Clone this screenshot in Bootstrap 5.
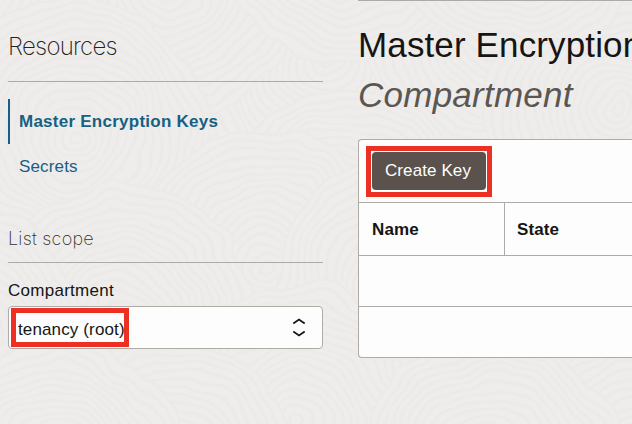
<!DOCTYPE html>
<html lang="en">
<head>
<meta charset="utf-8">
<meta name="viewport" content="width=device-width, initial-scale=1">
<title>Master Encryption Keys</title>
<link href="https://cdn.jsdelivr.net/npm/bootstrap@5.3.0/dist/css/bootstrap.min.css" rel="stylesheet">
<style>
  body { font-family: "Liberation Sans", Arial, sans-serif; background: #edecea; color: #161513; width: 632px; height: 424px; overflow: hidden; }
  .texture { position: absolute; inset: 0; z-index: -1; }
  .side { width: 315px; margin-left: 8px; }
  .thin { font-family: Inter, "Liberation Sans", sans-serif; font-weight: 200; border-bottom: 1px solid #aeaaa6; }
  .res-title { height: 82px; padding-top: 31px; font-size: 24px; line-height: 32px; letter-spacing: -.75px; color: #24211f; }
  .res-nav { padding-top: 17px; }
  .res-nav .nav-link { height: 45px; padding: 0 0 0 9px; line-height: 46px; font-size: 17px; color: #176083; border-left: 2px solid transparent; letter-spacing: .15px; }
  .res-nav .nav-link.active { font-weight: 700; border-left-color: #176083; color: #176083; letter-spacing: .25px; }
  .scope-title { height: 74px; padding-top: 38px; font-size: 18px; line-height: 24px; letter-spacing: .22px; color: #34302d; }
  .scope-label { padding-top: 18px; line-height: 20px; font-size: 17px; letter-spacing: .27px; height: 43px; }
  .picker { height: 43px; background: #fdfdfd; border: 1px solid #aeaaa6; border-radius: 4px; padding: 0 16px 0 2px; }
  .outline-red { border: 5px solid #ec3024; }
  .picked { width: 118px; height: 39px; font-size: 17px; line-height: 33px; letter-spacing: .13px; padding-left: 2px; }
  .main-pane { width: 274px; margin-left: 35px; border-top: 1px solid #aeaaa6; }
  .pane-title { font-size: 35px; line-height: 50px; margin: 19px 0 0; font-weight: 400; letter-spacing: .13px; overflow: hidden; }
  .pane-title em { color: #5c5652; display: block; letter-spacing: .25px; }
  .keys { margin-top: 19px; height: 219px; border: 1px solid #aeaaa6; border-right: 0; border-radius: 4px 0 0 4px; background: #fdfdfd; }
  .tools { height: 62px; padding: 6px 0 0 7px; }
  .create-wrap { width: 126px; height: 51px; }
  .create-wrap .btn { width: 114px; height: 38px; margin: 1px; background: #5b524e; color: #fff; border: 0; border-radius: 4px; padding: 0 2px 0 0; font-size: 17px; letter-spacing: .1px; }
  .keys .table { --bs-table-bg: transparent; table-layout: fixed; font-size: 17px; color: #161513; border-color: #aeaaa6; border-collapse: separate; border-spacing: 0; }
  .keys th, .keys td { border-width: 0; border-top: 1px solid #aeaaa6; padding: 0 12px !important; vertical-align: middle; }
  .keys th { height: 53px; letter-spacing: .1px; padding-top: 1px !important; }
  .keys th:first-child { width: 146px; border-right: 1px solid #aeaaa6; padding-left: 13px !important; }
  .keys td { height: 51px; }
</style>
</head>
<body>
<svg class="texture" width="632" height="424" aria-hidden="true">
  <defs>
    <radialGradient id="ring" gradientUnits="userSpaceOnUse" cx="0" cy="0" r="8" spreadMethod="repeat">
      <stop offset="0" stop-color="#eeedeb"/><stop offset=".5" stop-color="#eeedeb"/>
      <stop offset=".75" stop-color="#eae9e7"/><stop offset="1" stop-color="#eeedeb"/>
    </radialGradient>
    <circle id="disc" r="135" fill="url(#ring)"/>
    <filter id="wobble" x="-10%" y="-10%" width="120%" height="120%">
      <feTurbulence type="fractalNoise" baseFrequency=".02" numOctaves="2" seed="4"/>
      <feDisplacementMap in="SourceGraphic" scale="22" xChannelSelector="R" yChannelSelector="G"/>
    </filter>
  </defs>
  <g filter="url(#wobble)">
    <rect x="-60" y="-60" width="760" height="550" fill="url(#ring)"/>
    <use href="#disc" x="330" y="60"/>
    <use href="#disc" x="500" y="30"/>
    <use href="#disc" x="620" y="110"/>
    <use href="#disc" x="170" y="-20"/>
    <use href="#disc" x="350" y="-70"/>
    <use href="#disc" x="520" y="-80"/>
    <use href="#disc" x="-20" y="-10"/>
    <use href="#disc" x="345" y="225"/>
    <use href="#disc" x="75" y="133"/>
    <use href="#disc" x="265" y="265"/>
    <use href="#disc" x="410" y="290"/>
    <use href="#disc" x="120" y="320"/>
    <use href="#disc" x="-50" y="340"/>
    <use href="#disc" x="300" y="420"/>
    <use href="#disc" x="640" y="440"/>
    <use href="#disc" x="490" y="470"/>
    <use href="#disc" x="170" y="480"/>
    <use href="#disc" x="50" y="470"/>
  </g>
</svg>
<div class="d-flex">
  <aside class="side flex-shrink-0">
    <h2 class="thin res-title m-0">Resources</h2>
    <nav class="nav flex-column res-nav">
      <a class="nav-link active" href="#">Master Encryption Keys</a>
      <a class="nav-link" href="#">Secrets</a>
    </nav>
    <h3 class="thin scope-title m-0">List scope</h3>
    <label class="scope-label d-block">Compartment</label>
    <div class="picker d-flex align-items-center justify-content-between">
      <div class="picked outline-red text-nowrap">tenancy (root)</div>
      <svg width="14" height="20" viewBox="0 0 14 20" fill="none" stroke="#161513" stroke-width="1.8" aria-hidden="true"><path d="M1.3 5.4 7 1.6l5.7 3.8M1.3 13.6 7 17.4l5.7-3.8"/></svg>
    </div>
  </aside>
  <main class="main-pane flex-shrink-0">
    <h1 class="pane-title text-nowrap">Master Encryption <em>Compartment</em></h1>
    <section class="keys">
      <div class="tools">
        <div class="create-wrap outline-red"><button class="btn" type="button">Create Key</button></div>
      </div>
      <table class="table m-0">
        <thead><tr><th>Name</th><th>State</th></tr></thead>
        <tbody><tr><td colspan="2"></td></tr><tr><td colspan="2"></td></tr></tbody>
      </table>
    </section>
  </main>
</div>
<script src="https://cdn.jsdelivr.net/npm/bootstrap@5.3.0/dist/js/bootstrap.bundle.min.js"></script>
</body>
</html>
